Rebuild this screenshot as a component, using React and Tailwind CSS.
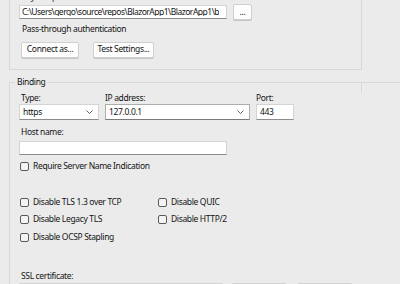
import React from "react";

const F = { fontFamily: '"Segoe UI", "Noto Sans", sans-serif', letterSpacing: "-0.35px" };

function Check({ label }) {
  return (
    <div className="flex items-center h-[10px] whitespace-nowrap">
      <div className="w-[9px] h-[9px] rounded-[2px] border border-[#5a5a5a] bg-[#f4f4f4] shrink-0" />
      <span className="ml-[4px] leading-none">{label}</span>
    </div>
  );
}

function Btn({ children, w }) {
  return (
    <div className={`h-[16px] ${w} flex items-center justify-center rounded-[2px] border border-[#d0d0d0] bg-[#fdfdfd] shadow-[0_1px_0_#c4c4c4] leading-none whitespace-nowrap`}>
      {children}
    </div>
  );
}

function Chevron() {
  return (
    <svg width="7" height="4" viewBox="0 0 7 4" className="mr-[5px] shrink-0">
      <path d="M0.5 0.5 L3.5 3.5 L6.5 0.5" fill="none" stroke="#555" strokeWidth="0.9" />
    </svg>
  );
}

export default function App() {
  return (
    <div
      className="w-[400px] h-[284px] overflow-hidden bg-[#ebebeb] text-[8.5px] text-[#141414] relative"
      style={F}
    >
      {/* Top group box */}
      <div className="ml-[9px] w-[353px] h-[70px] border-x border-b border-[#d8d8d8] relative">
        <div className="absolute left-[11px] top-[-7px] leading-none">Physical path:</div>
        <div className="flex items-start pt-[4px] pl-[9px]">
          <div className="mt-[1px] w-[208px] h-[14px] bg-white border border-[#d4d4d4] border-b-[#8c8c8c] flex items-center pl-[2px] overflow-hidden whitespace-nowrap leading-none">
            <span className="block overflow-hidden tracking-[-0.5px]">C:\Users\gergo\source\repos\BlazorApp1\BlazorApp1\b</span>
          </div>
          <div className="ml-[6px]">
            <Btn w="w-[19px]">...</Btn>
          </div>
        </div>
        <div className="pl-[12px] mt-[5px] leading-none">Pass-through authentication</div>
        <div className="flex pl-[11px] mt-[8px] gap-[14px]">
          <Btn w="w-[58px]">Connect as...</Btn>
          <Btn w="w-[61px]">Test Settings...</Btn>
        </div>
      </div>

      {/* Binding group */}
      <div className="ml-[9px] mt-[12px] w-[400px] h-[300px] border-l border-t border-[#d8d8d8] relative">
        <div className="absolute right-[47px] top-[-1px] w-[1px] h-[11px] bg-[#d8d8d8]" />
        <div className="absolute left-[5px] top-[-5px] px-[2px] bg-[#ebebeb] leading-none">Binding</div>

        <div className="flex pl-[9px] pt-[11px]">
          <div className="w-[80px]">
            <div className="pl-[2px] leading-none h-[9px]">Type:</div>
            <div className="mt-[1px] w-[80px] h-[16px] bg-white border border-[#d4d4d4] border-b-[#8c8c8c] flex items-center justify-between pl-[3px] leading-none">
              https
              <Chevron />
            </div>
          </div>
          <div className="ml-[6px] w-[145px]">
            <div className="leading-none h-[9px]">IP address:</div>
            <div className="mt-[1px] w-[145px] h-[16px] bg-white border border-[#adadad] border-b-[#7a7a7a] flex items-center justify-between pl-[3px] leading-none">
              127.0.0.1
              <Chevron />
            </div>
          </div>
          <div className="ml-[6px] w-[38px]">
            <div className="leading-none h-[9px]">Port:</div>
            <div className="mt-[1px] w-[38px] h-[16px] bg-white border border-[#d4d4d4] border-b-[#8c8c8c] flex items-center pl-[3px] leading-none">
              443
            </div>
          </div>
        </div>

        <div className="pl-[11px] mt-[8px] leading-none h-[9px]">Host name:</div>
        <div className="ml-[9px] mt-[4px] w-[208px] h-[14px] bg-white border border-[#d4d4d4] border-b-[#8c8c8c]" />

        <div className="pl-[10px] mt-[6px]">
          <Check label="Require Server Name Indication" />
        </div>

        <div className="pl-[10px] mt-[26px] flex">
          <div className="w-[138px] flex flex-col gap-[7.5px]">
            <Check label="Disable TLS 1.3 over TCP" />
            <Check label="Disable Legacy TLS" />
            <Check label="Disable OCSP Stapling" />
          </div>
          <div className="flex flex-col gap-[7.5px]">
            <Check label="Disable QUIC" />
            <Check label="Disable HTTP/2" />
          </div>
        </div>

        <div className="pl-[11px] mt-[30px] leading-none h-[9px]">SSL certificate:</div>
        <div className="flex pl-[9px] mt-[2px]">
          <div className="w-[204px] h-[16px] bg-white border border-[#d4d4d4]" />
          <div className="ml-[8px] w-[56px] h-[16px] bg-[#fdfdfd] border border-[#d0d0d0] rounded-[2px]" />
          <div className="ml-[10px] w-[56px] h-[16px] bg-[#fdfdfd] border border-[#d0d0d0] rounded-[2px]" />
        </div>
      </div>
    </div>
  );
}
